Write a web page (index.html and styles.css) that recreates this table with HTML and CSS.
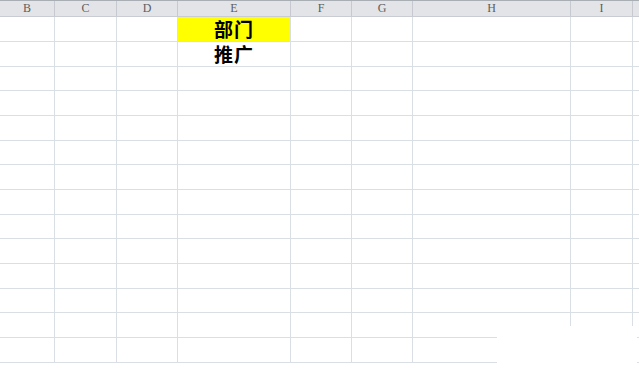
FILE: index.html
```html
<!DOCTYPE html>
<html lang="zh-CN">
<head>
<meta charset="utf-8">
<title>Sheet</title>
<link rel="stylesheet" href="styles.css">
</head>
<body>
<div class="sheet">
  <div class="row head">
    <div class="c c1">B</div><div class="c c2">C</div><div class="c c3">D</div><div class="c c4">E</div><div class="c c5">F</div><div class="c c6">G</div><div class="c c7">H</div><div class="c c8">I</div><div class="c c9"></div>
  </div>
  <div class="row first">
    <div class="c c1"></div><div class="c c2"></div><div class="c c3"></div><div class="c c4 hl">部门</div><div class="c c5"></div><div class="c c6"></div><div class="c c7"></div><div class="c c8"></div><div class="c c9"></div>
  </div>
  <div class="row">
    <div class="c c1"></div><div class="c c2"></div><div class="c c3"></div><div class="c c4 txt">推广</div><div class="c c5"></div><div class="c c6"></div><div class="c c7"></div><div class="c c8"></div><div class="c c9"></div>
  </div>
  <div class="row"><div class="c c1"></div><div class="c c2"></div><div class="c c3"></div><div class="c c4"></div><div class="c c5"></div><div class="c c6"></div><div class="c c7"></div><div class="c c8"></div><div class="c c9"></div></div>
  <div class="row"><div class="c c1"></div><div class="c c2"></div><div class="c c3"></div><div class="c c4"></div><div class="c c5"></div><div class="c c6"></div><div class="c c7"></div><div class="c c8"></div><div class="c c9"></div></div>
  <div class="row"><div class="c c1"></div><div class="c c2"></div><div class="c c3"></div><div class="c c4"></div><div class="c c5"></div><div class="c c6"></div><div class="c c7"></div><div class="c c8"></div><div class="c c9"></div></div>
  <div class="row"><div class="c c1"></div><div class="c c2"></div><div class="c c3"></div><div class="c c4"></div><div class="c c5"></div><div class="c c6"></div><div class="c c7"></div><div class="c c8"></div><div class="c c9"></div></div>
  <div class="row"><div class="c c1"></div><div class="c c2"></div><div class="c c3"></div><div class="c c4"></div><div class="c c5"></div><div class="c c6"></div><div class="c c7"></div><div class="c c8"></div><div class="c c9"></div></div>
  <div class="row"><div class="c c1"></div><div class="c c2"></div><div class="c c3"></div><div class="c c4"></div><div class="c c5"></div><div class="c c6"></div><div class="c c7"></div><div class="c c8"></div><div class="c c9"></div></div>
  <div class="row"><div class="c c1"></div><div class="c c2"></div><div class="c c3"></div><div class="c c4"></div><div class="c c5"></div><div class="c c6"></div><div class="c c7"></div><div class="c c8"></div><div class="c c9"></div></div>
  <div class="row"><div class="c c1"></div><div class="c c2"></div><div class="c c3"></div><div class="c c4"></div><div class="c c5"></div><div class="c c6"></div><div class="c c7"></div><div class="c c8"></div><div class="c c9"></div></div>
  <div class="row"><div class="c c1"></div><div class="c c2"></div><div class="c c3"></div><div class="c c4"></div><div class="c c5"></div><div class="c c6"></div><div class="c c7"></div><div class="c c8"></div><div class="c c9"></div></div>
  <div class="row"><div class="c c1"></div><div class="c c2"></div><div class="c c3"></div><div class="c c4"></div><div class="c c5"></div><div class="c c6"></div><div class="c c7"></div><div class="c c8"></div><div class="c c9"></div></div>
  <div class="row"><div class="c c1"></div><div class="c c2"></div><div class="c c3"></div><div class="c c4"></div><div class="c c5"></div><div class="c c6"></div><div class="c c7"></div><div class="c c8"></div><div class="c c9"></div></div>
  <div class="row"><div class="c c1"></div><div class="c c2"></div><div class="c c3"></div><div class="c c4"></div><div class="c c5"></div><div class="c c6"></div><div class="c c7"></div><div class="c c8"></div><div class="c c9"></div></div>
  <div class="mask"></div>
</div>
</body>
</html>
```
FILE: styles.css
```css
html, body {
  margin: 0;
  padding: 0;
  background: #fff;
  overflow: hidden;
}
.sheet {
  position: relative;
  width: 639px;
  height: 368px;
  overflow: hidden;
}
.row {
  display: flex;
  height: 24.667px;
  box-sizing: border-box;
  border-bottom: 1px solid #dadfe6;
}
.row.first {
  height: 25px;
}
.row.head {
  height: 17px;
  background: #e2e4e8;
  border-top: 1px solid #a9adb4;
  border-bottom: 1px solid #c9cdd3;
}
.c {
  box-sizing: border-box;
  border-right: 1px solid #dadfe6;
  flex: none;
  display: flex;
  align-items: center;
  justify-content: center;
}
.head .c {
  border-right-color: #c6cad0;
  font-family: "Liberation Serif", serif;
  font-size: 12px;
  color: #5d5d5d;
}
.c1 { width: 55px; }
.c2 { width: 62px; }
.c3 { width: 61px; }
.c4 { width: 113px; }
.c5 { width: 61px; }
.c6 { width: 61px; }
.c7 { width: 158px; }
.c8 { width: 62px; }
.c9 { flex: 1; border-right: none; }
.hl {
  background: #ffff00;
}
.hl, .txt {
  font-family: "Noto Sans CJK SC", sans-serif;
  font-weight: 700;
  font-size: 19px;
  line-height: 22px;
  color: #000;
  letter-spacing: 1px;
}
.mask {
  position: absolute;
  left: 497px;
  top: 326px;
  width: 140px;
  height: 42px;
  background: #fff;
}
```
